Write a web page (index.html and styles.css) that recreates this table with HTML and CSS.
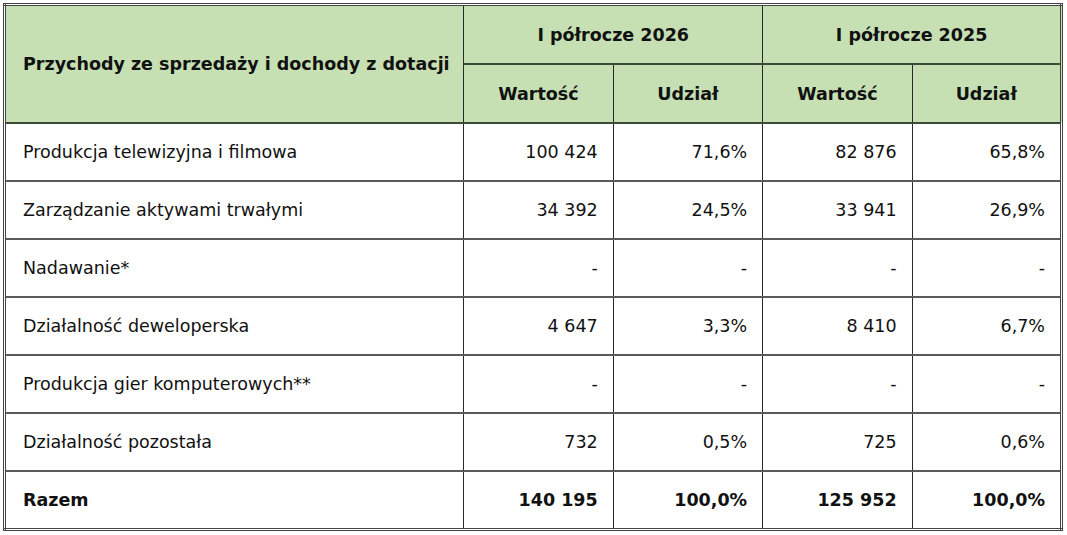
FILE: index.html
```html
<!DOCTYPE html>
<html lang="pl">
<head>
<meta charset="utf-8">
<title>Przychody</title>
<link rel="stylesheet" href="styles.css">
</head>
<body>
<table class="rev">
  <colgroup>
    <col class="c-name">
    <col class="c-val">
    <col class="c-val">
    <col class="c-val">
    <col class="c-val">
  </colgroup>
  <thead>
    <tr class="h1">
      <th rowspan="2" class="h-name">Przychody ze sprzedaży i dochody z dotacji</th>
      <th colspan="2">I półrocze 2026</th>
      <th colspan="2">I półrocze 2025</th>
    </tr>
    <tr class="h2">
      <th>Wartość</th>
      <th>Udział</th>
      <th>Wartość</th>
      <th>Udział</th>
    </tr>
  </thead>
  <tbody>
    <tr><td class="name">Produkcja telewizyjna i filmowa</td><td>100 424</td><td>71,6%</td><td>82 876</td><td>65,8%</td></tr>
    <tr><td class="name">Zarządzanie aktywami trwałymi</td><td>34 392</td><td>24,5%</td><td>33 941</td><td>26,9%</td></tr>
    <tr><td class="name">Nadawanie*</td><td>-</td><td>-</td><td>-</td><td>-</td></tr>
    <tr><td class="name">Działalność deweloperska</td><td>4 647</td><td>3,3%</td><td>8 410</td><td>6,7%</td></tr>
    <tr><td class="name">Produkcja gier komputerowych**</td><td>-</td><td>-</td><td>-</td><td>-</td></tr>
    <tr><td class="name">Działalność pozostała</td><td>732</td><td>0,5%</td><td>725</td><td>0,6%</td></tr>
    <tr class="total"><td class="name">Razem</td><td>140 195</td><td>100,0%</td><td>125 952</td><td>100,0%</td></tr>
  </tbody>
</table>
</body>
</html>
```

FILE: styles.css
```css
html, body {
  margin: 0;
  background: #ffffff;
}
body {
  padding: 3px;
  font-family: "DejaVu Sans", sans-serif;
  font-size: 17.5px;
  color: #111;
}
.rev {
  width: 1060px;
  border-collapse: collapse;
  table-layout: fixed;
  border: 3px double #444;
}
.c-name { width: 458px; }
.c-val { width: 149px; }
.rev th, .rev td {
  border-left: 1px solid #2a2a2a;
  border-right: 1px solid #2a2a2a;
  border-top: 2px solid #5a5a5a;
  border-bottom: 2px solid #5a5a5a;
}
.rev th {
  background: #c6e0b4;
  font-weight: bold;
  text-align: center;
  padding: 0;
}
.rev thead tr.h1 th { height: 57px; }
.rev thead tr.h2 th { height: 57px; }
.rev th.h-name {
  text-align: left;
  padding-left: 17px;
}
.rev thead tr.h1 th { border-top: none; border-bottom-color: #3d4a3a; }
.rev thead tr.h2 th { border-bottom-color: #3d4a3a; }
.rev td {
  height: 56px;
  text-align: right;
  padding: 0 15px 0 0;
}
.rev td.name {
  text-align: left;
  padding: 0 0 0 17px;
}
.rev tr.total td { font-weight: bold; border-bottom: none; }
```
